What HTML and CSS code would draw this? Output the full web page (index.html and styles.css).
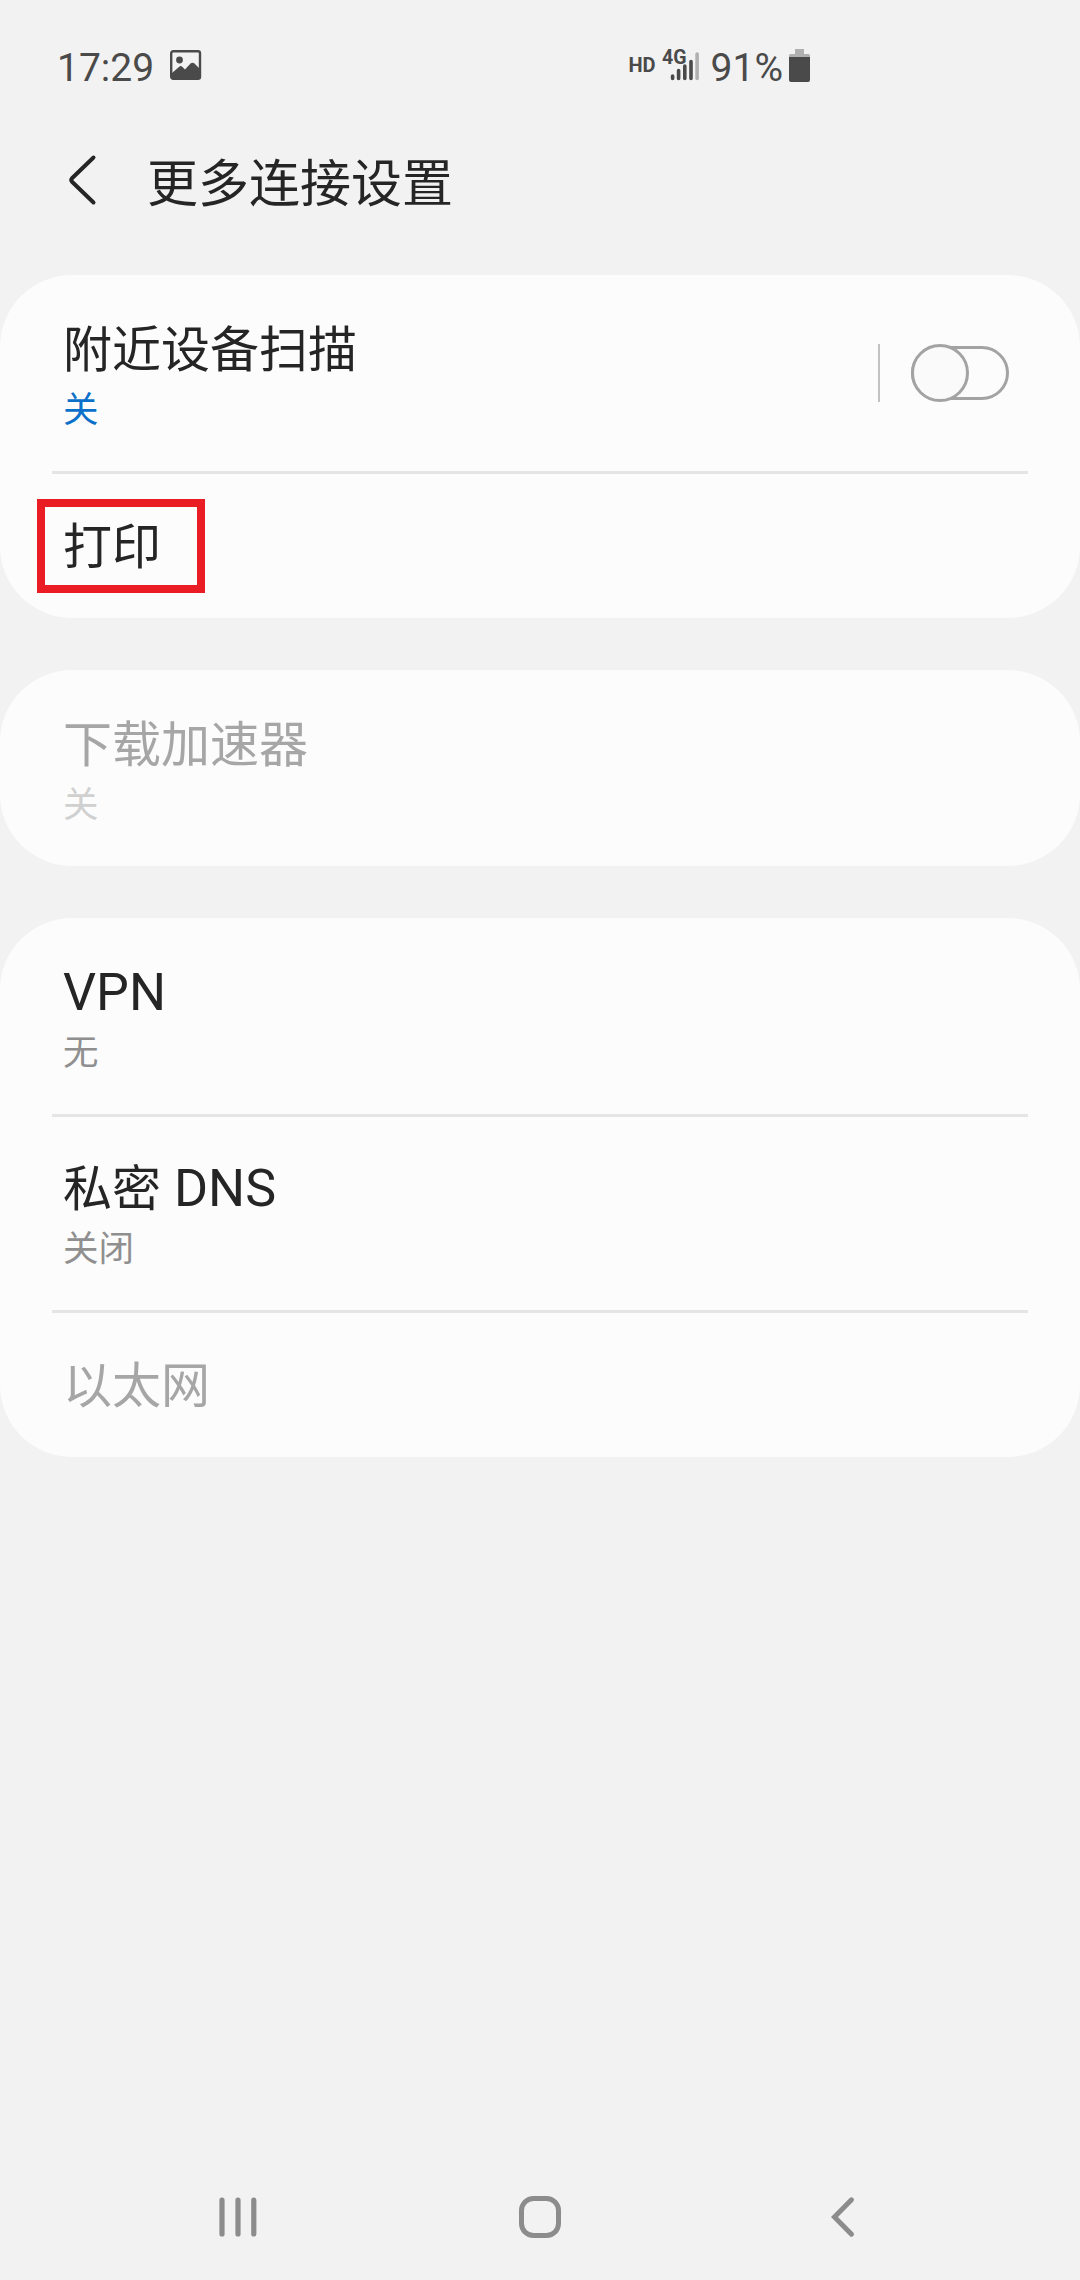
FILE: index.html
```
<!DOCTYPE html>
<html lang="zh-CN">
<head>
    <meta charset="UTF-8">
    <meta name="viewport" content="width=device-width, initial-scale=1.0">
    <title>更多连接设置</title>
    <link rel="stylesheet" href="styles.css">
</head>
<body>
    <div class="status-bar">
        <div class="status-left">
            <span class="clock">17:29</span>
            <svg class="icon-image" width="32" height="30" viewBox="0 0 32 30">
                <rect x="1.2" y="1.2" width="28.8" height="27.6" rx="2" fill="none" stroke="#4a4a4a" stroke-width="2.400"/>
                <circle cx="9.5" cy="10" r="3.4" fill="#4a4a4a"/>
                <path d="M2 23L9.500 16.500Q11 15.500 12.500 17L15 19.500L20.500 13.500Q22.500 12 24.500 13.500L30 19V29H2Z" fill="#4a4a4a"/>
            </svg>
        </div>
        <div class="status-right">
            <span class="hd">HD</span>
            <svg class="icon-signal" width="38" height="34" viewBox="0 0 38 34">
                <text class="network" x="-1" y="15">4G</text>
                <g stroke-width="3.600" stroke-linecap="round" stroke="#4a4a4a">
                    <path d="M9.600 27V29.500M15.600 21.500V29.500M21.800 17V29.500M28 12.500V29.500"/>
                    <path d="M34.100 5V29.500" stroke="#b0b0b0"/>
                </g>
            </svg>
            <span class="percent">91%</span>
            <svg class="icon-battery" width="21" height="33" viewBox="0 0 21 33">
                <path d="M6 0H15V5H19.500Q21 5 21 6.500V9H0V6.500Q0 5 1.500 5H6Z" fill="#b0b0b0"/>
                <path d="M0 8H21V31Q21 33 19 33H2Q0 33 0 31Z" fill="#4a4a4a"/>
            </svg>
        </div>
    </div>

    <div class="header">
        <svg class="icon-back" width="27" height="50" viewBox="0 0 27 50">
            <path d="M24.500 2.500L3 23.200Q1.500 25 3 26.800L24.500 47.500" fill="none" stroke="#252525" stroke-width="4" stroke-linecap="round" stroke-linejoin="round"/>
        </svg>
        <h1>更多连接设置</h1>
    </div>

    <div class="list">
        <div class="card">
            <div class="row">
                <div class="row-text">
                    <div class="title">附近设备扫描</div>
                    <div class="sub active">关</div>
                </div>
                <div class="switch-box">
                    <div class="switch"><div class="knob"></div></div>
                </div>
            </div>
            <div class="row single">
                <div class="row-text">
                    <div class="title">打印</div>
                </div>
                <div class="highlight"></div>
            </div>
        </div>

        <div class="card">
            <div class="row disabled">
                <div class="row-text">
                    <div class="title">下载加速器</div>
                    <div class="sub">关</div>
                </div>
            </div>
        </div>

        <div class="card">
            <div class="row">
                <div class="row-text">
                    <div class="title"><span class="latin">VPN</span></div>
                    <div class="sub">无</div>
                </div>
            </div>
            <div class="row">
                <div class="row-text">
                    <div class="title">私密<span class="latin"> DNS</span></div>
                    <div class="sub">关闭</div>
                </div>
            </div>
            <div class="row single disabled">
                <div class="row-text">
                    <div class="title">以太网</div>
                </div>
            </div>
        </div>
    </div>

    <div class="nav-bar">
        <svg width="38" height="40" viewBox="0 0 38 40">
            <path d="M4 3V37M20 3V37M35.800 3V37" stroke="#8c8c8c" stroke-width="5.200" stroke-linecap="round"/>
        </svg>
        <svg width="42" height="42" viewBox="0 0 42 42">
            <rect x="2.500" y="2.500" width="37" height="37" rx="12" fill="none" stroke="#8c8c8c" stroke-width="5"/>
        </svg>
        <svg width="24" height="40" viewBox="0 0 24 40">
            <path d="M20.500 2.800L3.500 20L20.500 37.200" fill="none" stroke="#8c8c8c" stroke-width="5" stroke-linecap="round"/>
        </svg>
    </div>
</body>
</html>
```
FILE: styles.css
```
* {
    box-sizing: border-box;
}

body {
    margin: 0;
    width: 1080px;
    height: 2280px;
    display: flex;
    flex-direction: column;
    background-color: #f2f2f2;
    color: #252525;
    font-family: "Noto Sans CJK SC", Roboto, sans-serif;
}

svg {
    display: block;
    flex: none;
    overflow: visible;
}

/* Status bar */
.status-bar {
    display: flex;
    justify-content: space-between;
    height: 130px;
    padding: 49px 270px 0 57px;
    font-family: Roboto, sans-serif;
    color: #4a4a4a;
}

.status-left, .status-right {
    display: flex;
    align-items: flex-start;
}

.clock, .percent {
    font-size: 39px;
    line-height: 38px;
}

.icon-image {
    margin: 1px 0 0 16px;
}

.hd {
    font-size: 20px;
    line-height: 32px;
    font-weight: 700;
}

.icon-signal {
    margin-left: 7px;
}

.network {
    font-family: Roboto, sans-serif;
    font-size: 19.5px;
    font-weight: 700;
    fill: #4a4a4a;
}

.percent {
    margin-left: 10px;
}

.icon-battery {
    margin-left: 6px;
}

/* Page header */
.header {
    display: flex;
    align-items: center;
    height: 100px;
    padding-left: 69px;
}

h1 {
    margin: 0 0 0 51px;
    font-size: 51px;
    font-weight: 400;
    line-height: 74px;
}

/* Setting cards */
.list {
    display: flex;
    flex-direction: column;
    gap: 52px;
    margin-top: 45px;
}

.card {
    padding: 0 52px;
    border-radius: 72px;
    background-color: #fcfcfc;
}

.row {
    position: relative;
    display: flex;
    justify-content: space-between;
    height: 196px;
    padding: 36px 19px 0 11px;
}

.row + .row {
    padding-top: 33px;
    border-top: 3px solid #e5e5e5;
}

.row.single {
    height: 147px;
}

.row + .row.single {
    padding-top: 34px;
}

.title {
    font-size: 49px;
    line-height: 70px;
}

.latin {
    font-family: Roboto, sans-serif;
    font-size: 52px;
    line-height: 1;
    white-space: pre;
}

.sub {
    font-size: 35.5px;
    line-height: 52px;
    color: #8f8f8f;
}

.sub.active {
    color: #0a70c9;
}

.disabled .title {
    color: #a6a6a6;
}

.disabled .sub {
    color: #d0d0d0;
}

/* Toggle */
.switch-box {
    height: 58px;
    margin-top: 33px;
    padding: 2px 0 0 31px;
    border-left: 2px solid #c2c2c2;
}

.switch {
    position: relative;
    width: 98px;
    height: 54px;
    border: 3px solid #a3a3a3;
    border-radius: 27px;
}

.knob {
    position: absolute;
    left: -3px;
    top: -5px;
    width: 58px;
    height: 58px;
    border: 3px solid #a3a3a3;
    border-radius: 50%;
    background-color: #fafafa;
}

/* Red frame over the print entry */
.highlight {
    position: absolute;
    left: -15px;
    top: 25px;
    width: 168px;
    height: 94px;
    border: 8px solid #ea1c24;
}

/* Navigation bar */
.nav-bar {
    display: grid;
    grid-template-columns: repeat(3, 1fr);
    align-items: center;
    justify-items: center;
    height: 126px;
    margin-top: auto;
    padding: 0 86px;
}
```
